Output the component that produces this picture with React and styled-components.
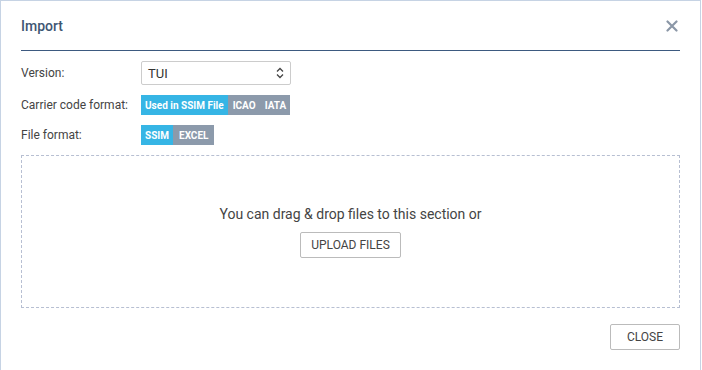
import styled, {createGlobalStyle} from 'styled-components'
import {useState} from 'react'

const GlobalStyle = createGlobalStyle`
  html, body {
    margin: 0;
    padding: 0;
    background: #ffffff;
  }
  body {
    font-family: Roboto, "Liberation Sans", Arial, sans-serif;
    color: #444444;
  }
`

const Dialog = styled.div`
  box-sizing: border-box;
  width: 701px;
  height: 380px;
  border: 1px solid #c6d3e4;
  border-bottom: none;
  padding: 0 20px;
  background: #fff;
`

const Header = styled.div`
  height: 49px;
  display: flex;
  align-items: center;
  justify-content: space-between;
  border-bottom: 1px solid #3d5a80;
`

const Title = styled.h2`
  margin: 0;
  font-size: 14px;
  font-weight: 500;
  color: #3e5673;
`

const CloseIcon = styled.button`
  border: none;
  background: transparent;
  padding: 0;
  margin-right: 1px;
  width: 14px;
  height: 14px;
  display: flex;
  align-items: center;
  justify-content: center;
  cursor: pointer;
`

const Form = styled.div`
  margin-top: 10px;
  display: flex;
  flex-direction: column;
  gap: 10px;
`

const Row = styled.div`
  display: grid;
  grid-template-columns: 120px 1fr;
  align-items: center;
`

const Label = styled.span`
  font-size: 12px;
  color: #444;
`

const Select = styled.div`
  box-sizing: border-box;
  width: 150px;
  height: 24px;
  border: 1px solid #cccccc;
  border-radius: 2px;
  display: flex;
  align-items: center;
  justify-content: space-between;
  padding: 0 5px 0 6px;
  font-size: 13px;
  color: #333;
`

const Toggle = styled.div`
  display: flex;
`

const ToggleButton = styled.button`
  border: none;
  height: 20px;
  padding: 0 ${props => props.pad}px;
  font-family: inherit;
  font-size: 10px;
  font-weight: 700;
  color: #ffffff;
  background: ${props => props.active ? '#36b5e5' : '#8c9aab'};
  cursor: pointer;
`

const DropZone = styled.div`
  box-sizing: border-box;
  height: 153px;
  border: 1px dashed #b7bfd2;
  display: flex;
  flex-direction: column;
  align-items: center;
  justify-content: center;
  gap: 10px;
`

const DropText = styled.p`
  margin: 0;
  font-size: 14px;
  color: #444;
`

const OutlineButton = styled.button`
  box-sizing: border-box;
  height: 26px;
  padding: 0 ${props => props.pad}px;
  border: 1px solid #bbbbbb;
  border-radius: 2px;
  background: #fff;
  font-family: inherit;
  font-size: 12px;
  color: #444;
  cursor: pointer;
`

const Footer = styled.div`
  margin-top: 16px;
  display: flex;
  justify-content: flex-end;
`

const carrierOptions = [
  {label: 'Used in SSIM File', pad: 4},
  {label: 'ICAO', pad: 5},
  {label: 'IATA', pad: 4},
]
const fileOptions = [
  {label: 'SSIM', pad: 4},
  {label: 'EXCEL', pad: 6},
]

const App = () => {
  const [carrier, setCarrier] = useState('Used in SSIM File')
  const [fileFormat, setFileFormat] = useState('SSIM')

  return (
    <>
      <GlobalStyle />
      <Dialog>
        <Header>
          <Title>Import</Title>
          <CloseIcon aria-label="close">
            <svg width="12" height="12" viewBox="0 0 12 12">
              <path d="M1.5 1.5 L10.5 10.5 M10.5 1.5 L1.5 10.5" stroke="#8b97a7" strokeWidth="2.2" strokeLinecap="round" />
            </svg>
          </CloseIcon>
        </Header>
        <Form>
          <Row>
            <Label>Version:</Label>
            <Select>
              <span>TUI</span>
              <svg width="10" height="14" viewBox="0 0 10 14">
                <path d="M2 5.5 L5 2.5 L8 5.5 M2 8.5 L5 11.5 L8 8.5" fill="none" stroke="#444" strokeWidth="1.3" />
              </svg>
            </Select>
          </Row>
          <Row>
            <Label>Carrier code format:</Label>
            <Toggle>
              {carrierOptions.map(o => (
                <ToggleButton key={o.label} pad={o.pad} active={carrier === o.label} onClick={() => setCarrier(o.label)}>
                  {o.label}
                </ToggleButton>
              ))}
            </Toggle>
          </Row>
          <Row>
            <Label>File format:</Label>
            <Toggle>
              {fileOptions.map(o => (
                <ToggleButton key={o.label} pad={o.pad} active={fileFormat === o.label} onClick={() => setFileFormat(o.label)}>
                  {o.label}
                </ToggleButton>
              ))}
            </Toggle>
          </Row>
          <DropZone>
            <DropText>You can drag &amp; drop files to this section or</DropText>
            <OutlineButton pad={10}>UPLOAD FILES</OutlineButton>
          </DropZone>
        </Form>
        <Footer>
          <OutlineButton pad={16}>CLOSE</OutlineButton>
        </Footer>
      </Dialog>
    </>
  )
}

export default App
